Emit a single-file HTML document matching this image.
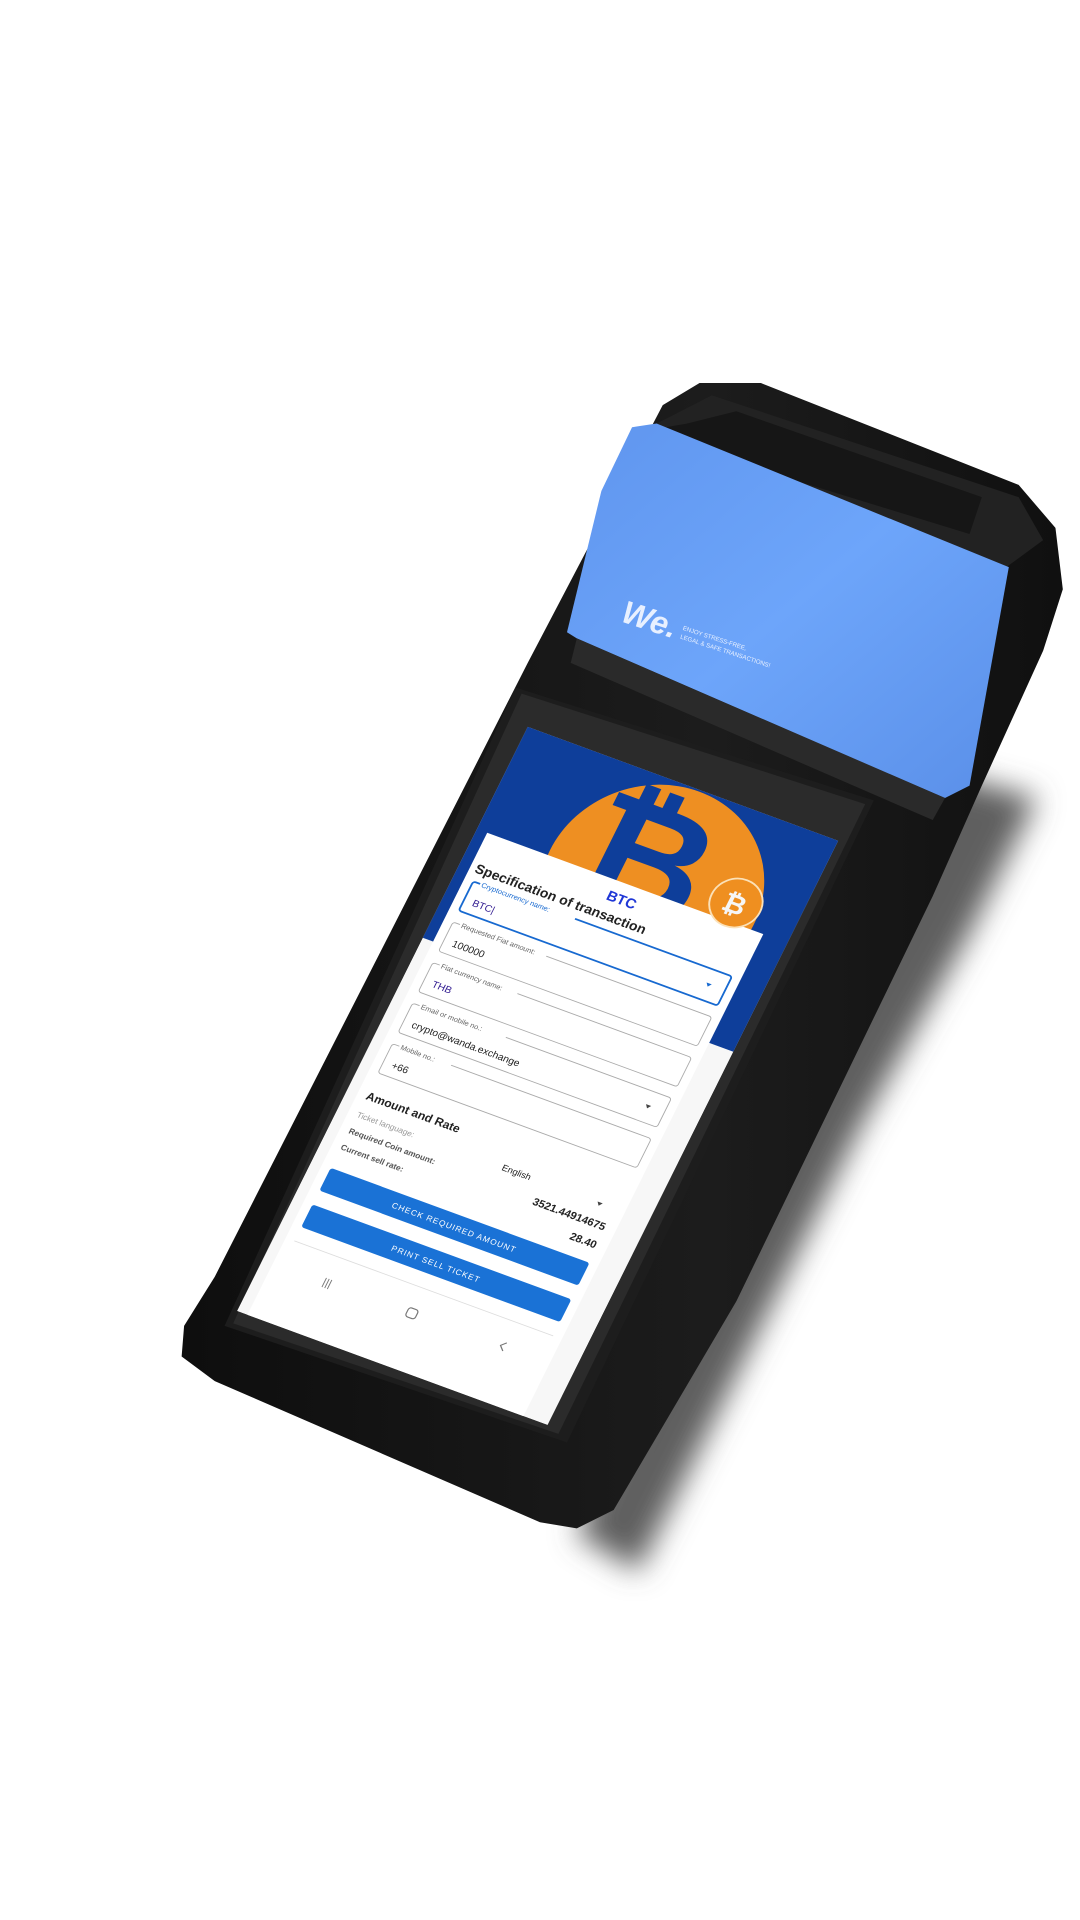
<!DOCTYPE html>
<html><head><meta charset="utf-8"><style>
html,body{margin:0;padding:0;background:#fff;width:1080px;height:1920px;overflow:hidden}
svg{display:block}
text{font-family:"Liberation Sans",sans-serif}
</style></head><body>
<svg width="1080" height="1920" viewBox="0 0 880 1564" preserveAspectRatio="none">
<defs>
<filter id="bl" x="-30%" y="-30%" width="160%" height="160%"><feGaussianBlur stdDeviation="12"/></filter>
<linearGradient id="blue" x1="0" y1="0" x2="1" y2="1"><stop offset="0" stop-color="#5f95ee"/><stop offset="0.5" stop-color="#6da5fa"/><stop offset="1" stop-color="#5a8fe8"/></linearGradient>
<linearGradient id="body" x1="0" y1="0" x2="1" y2="0"><stop offset="0" stop-color="#0e0e0e"/><stop offset="0.6" stop-color="#1c1c1c"/><stop offset="1" stop-color="#101010"/></linearGradient>
<clipPath id="scr"><rect x="0" y="0" width="360" height="720"/></clipPath>
</defs>
<!-- shadow -->
<polygon points="770,630 845,650 790,760 700,920 600,1120 520,1280 470,1250 600,950" fill="#5e5e5e" filter="url(#bl)"/>
<!-- body -->
<polygon points="430,540 540,330 570,312 620,312 830,395 860,430 866,480 850,530 800,640 760,730 600,1060 500,1230 470,1245 440,1240 175,1125 148,1105 150,1080 175,1040" fill="url(#body)"/>
<!-- printer top -->
<polygon points="545,340 580,322 830,405 850,440 820,462 520,352" fill="#222"/>
<polygon points="560,345 600,335 800,405 790,435 520,352" fill="#161616"/>
<!-- blue cover -->
<polygon points="515,348 535,345 822,462 790,640 770,650 700,620 470,520 462,515 490,400" fill="url(#blue)"/>
<polygon points="470,520 770,650 760,668 465,540" fill="#2a2a2a"/>
<text x="0" y="0" transform="translate(505,506) rotate(18)" font-size="26" font-weight="bold" fill="#e8f0ff" font-style="italic">We.</text>
<text x="0" y="0" transform="translate(556,513) rotate(18)" font-size="5" fill="#e8f0ff">ENJOY STRESS-FREE,</text>
<text x="0" y="0" transform="translate(554,520) rotate(18)" font-size="5" fill="#e8f0ff">LEGAL &amp; SAFE TRANSACTIONS!</text>
<!-- bezel -->
<polygon points="420,560 712,652 462,1175 183,1080" fill="#1d1d1d"/>
<polygon points="425,565 705,655 455,1168 190,1078" fill="#2b2b2b"/>
<!-- screen content -->
<g transform="matrix(0.703,0.258,-0.329,0.661,430,592)">
<g clip-path="url(#scr)">
<rect width="360" height="720" fill="#f7f7f7"/>
<rect width="360" height="260" fill="#0e3e9a"/>
<circle cx="200" cy="120" r="118" fill="#ee8f22"/>
<text x="110" y="150" font-size="170" font-weight="bold" fill="#0e3e9a">₿</text>
<rect x="12" y="126" width="320" height="600" fill="#fff"/>
<circle cx="290" cy="104" r="28" fill="#ef8f20" stroke="#fbe1b8" stroke-width="2"/>
<text x="277" y="116" font-size="30" font-weight="bold" fill="#f6f6f6">₿</text>
<text x="160" y="150" font-size="16" font-weight="bold" fill="#1f37d6">BTC</text>
<text x="18" y="172" font-size="15" font-weight="bold" fill="#222">Specification of transaction</text>
<rect x="22" y="182" width="300" height="36" rx="3" fill="none" stroke="#1769d0" stroke-width="2"/>
<rect x="30" y="176" width="110" height="10" fill="#fff"/>
<text x="32" y="185" font-size="8" fill="#1769d0">Cryptocurrency name:</text>
<text x="32" y="208" font-size="11" fill="#301a90">BTC|</text>
<path d="M300 198 l6 0 l-3 4z" fill="#1769d0"/>
<g fill="none" stroke="#aaa" stroke-width="1">
<rect x="22" y="232" width="300" height="36" rx="3"/>
<rect x="22" y="282" width="300" height="36" rx="3"/>
<rect x="22" y="332" width="300" height="36" rx="3"/>
<rect x="22" y="382" width="300" height="36" rx="3"/>
</g>
<g fill="#fff"><rect x="30" y="227" width="100" height="10"/><rect x="30" y="277" width="90" height="10"/><rect x="30" y="327" width="100" height="10"/><rect x="30" y="377" width="60" height="10"/></g>
<g font-size="8" fill="#666">
<text x="32" y="235">Requested Fiat amount:</text>
<text x="32" y="285">Fiat currency name:</text>
<text x="32" y="335">Email or mobile no.:</text>
<text x="32" y="385">Mobile no.:</text>
</g>
<text x="32" y="258" font-size="11" fill="#222">100000</text>
<text x="32" y="308" font-size="11" fill="#301a90">THB</text>
<text x="32" y="358" font-size="11" fill="#222">crypto@wanda.exchange</text>
<path d="M300 348 l6 0 l-3 4z" fill="#444"/>
<text x="32" y="408" font-size="11" fill="#222">+66</text>
<text x="22" y="450" font-size="13" font-weight="bold" fill="#222">Amount and Rate</text>
<text x="22" y="472" font-size="9" fill="#999">Ticket language:</text>
<text x="22" y="492" font-size="9" font-weight="bold" fill="#555">Required Coin amount:</text>
<text x="22" y="512" font-size="9" font-weight="bold" fill="#555">Current sell rate:</text>
<text x="190" y="472" font-size="10" fill="#222">English</text>
<path d="M300 468 l6 0 l-3 4z" fill="#444"/>
<text x="320" y="496" font-size="12" font-weight="bold" fill="#222" text-anchor="end">3521.44914675</text>
<text x="320" y="518" font-size="12" font-weight="bold" fill="#222" text-anchor="end">28.40</text>
<rect x="22" y="535" width="300" height="28" rx="3" fill="#1a72d6"/>
<text x="172" y="553" font-size="9" fill="#fff" text-anchor="middle" letter-spacing="1">CHECK REQUIRED AMOUNT</text>
<rect x="22" y="580" width="300" height="28" rx="3" fill="#1a72d6"/>
<text x="172" y="598" font-size="9" fill="#fff" text-anchor="middle" letter-spacing="1">PRINT SELL TICKET</text>
<line x1="22" y1="625" x2="322" y2="625" stroke="#ddd"/>
<text x="70" y="660" font-size="12" fill="#777">|||</text>
<rect x="167" y="650" width="11" height="11" rx="3" fill="none" stroke="#777" stroke-width="1.3"/>
<path d="M280 650 l-5 5 l5 5" fill="none" stroke="#777" stroke-width="1.3"/>
</g>
</g>
</svg>
</body></html>
